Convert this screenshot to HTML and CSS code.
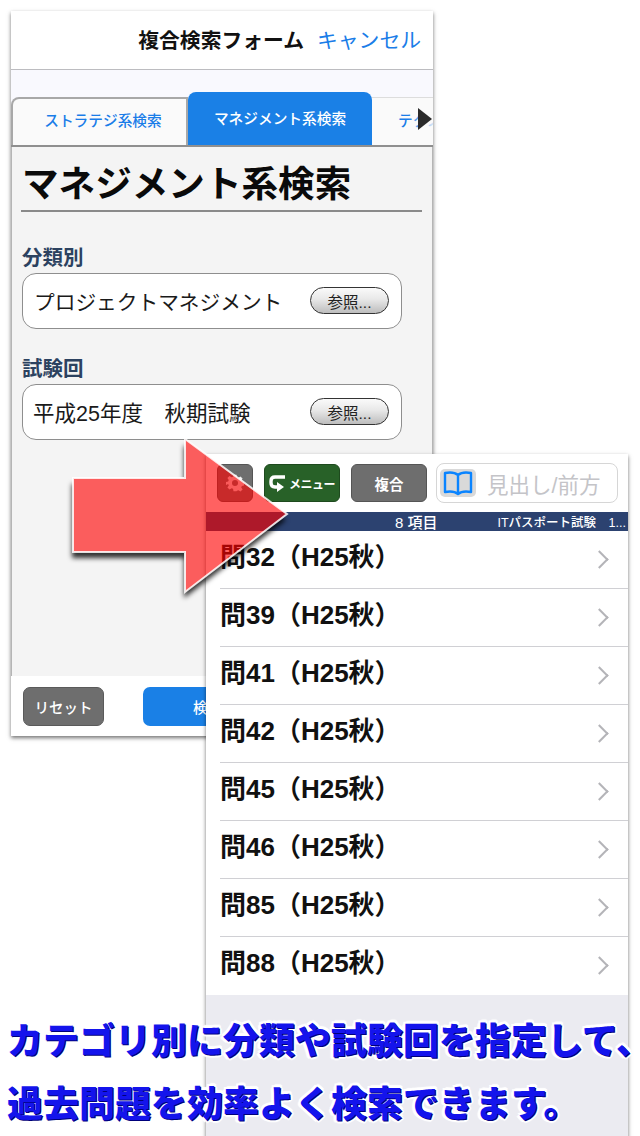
FILE: index.html
```html
<!DOCTYPE html>
<html lang="ja">
<head>
    <meta charset="UTF-8">
    <meta name="viewport" content="width=device-width, initial-scale=1.0">
    <title>複合検索フォーム</title>
    <link rel="stylesheet" href="styles.css">
</head>
<body>
    <!-- back window: search form -->
    <section class="phone phone-form">
        <header class="form-header">
            <h2>複合検索フォーム</h2>
            <a href="#">キャンセル</a>
        </header>
        <div class="tab-band"></div>
        <nav class="tabs">
            <a href="#" class="tab">ストラテジ系検索</a>
            <a href="#" class="tab tab-active">マネジメント系検索</a>
            <a href="#" class="tab tab-cut">テクノロジ系検索</a>
            <svg class="tab-more" width="14" height="22" viewBox="0 0 14 22"><path d="M0 0L14 11L0 22Z" fill="#2a2a2a"/></svg>
        </nav>
        <div class="form-body">
            <h1>マネジメント系検索</h1>
            <div class="group">
                <h3>分類別</h3>
                <div class="field">
                    <span class="field-kana">プロジェクトマネジメント</span>
                    <button class="browse">参照...</button>
                </div>
            </div>
            <div class="group">
                <h3>試験回</h3>
                <div class="field">
                    <span>平成25年度　秋期試験</span>
                    <button class="browse">参照...</button>
                </div>
            </div>
        </div>
        <footer class="form-footer">
            <button class="btn-reset">リセット</button>
            <button class="btn-search">検索を実行する</button>
        </footer>
    </section>

    <!-- front window: results -->
    <section class="phone phone-list">
        <div class="toolbar">
            <button class="tool tool-gear">
                <svg width="18" height="18" viewBox="0 0 24 24"><path fill="#f0f0f0" fill-rule="evenodd" d="M10 1h4l.6 3.2 2 .8L19.300 3.200l2.800 2.800-1.800 2.700.8 2 3.200.6v4l-3.200.6-.8 2 1.800 2.700-2.800 2.800-2.700-1.800-2 .8L14 23h-4l-.6-3.200-2-.8-2.700 1.800-2.800-2.800 1.800-2.700-.8-2L-.3 14.700v-4l3.200-.6.8-2L1.900 5.400 4.700 2.600l2.700 1.800 2-.8zM12 8a4 4 0 1 0 0 8 4 4 0 0 0 0-8z"/></svg>
            </button>
            <button class="tool tool-menu">
                <svg width="18" height="18" viewBox="0 0 18 18"><path fill="none" stroke="#fff" stroke-width="3.400" d="M16 3H6Q2 3 2 7V9Q2 13 6 13H8"/><path fill="#fff" d="M8 8l7 5-7 5z"/></svg>
                <span>メニュー</span>
            </button>
            <button class="tool tool-multi">複合</button>
            <div class="search-box">
                <span class="book">
                    <svg width="30" height="26" viewBox="0 0 30 26"><path fill="none" stroke="#0a84ff" stroke-width="2.400" stroke-linejoin="round" d="M15 5C12 2.500 7 2 2 3v19c5-1 10-.5 13 2 3-2.500 8-3 13-2V3c-5-1-10-.5-13 2zM15 5v19"/></svg>
                </span>
                <span class="search-hint">見出し/前方</span>
            </div>
        </div>
        <div class="count-bar">
            <span class="count">8 項目</span>
            <span class="exam">ITパスポート試験　1...</span>
        </div>
        <ul class="rows">
            <li>問32（H25秋）</li>
            <li>問39（H25秋）</li>
            <li>問41（H25秋）</li>
            <li>問42（H25秋）</li>
            <li>問45（H25秋）</li>
            <li>問46（H25秋）</li>
            <li>問85（H25秋）</li>
            <li>問88（H25秋）</li>
        </ul>
    </section>

    <!-- red arrow over both windows -->
    <svg class="arrow" width="240" height="180" viewBox="60 430 240 180">
        <defs>
            <filter id="soft" x="-20%" y="-20%" width="140%" height="140%"><feGaussianBlur stdDeviation="2.500"/></filter>
            <mask id="outside" maskUnits="userSpaceOnUse" x="60" y="430" width="240" height="180">
                <rect x="60" y="430" width="240" height="180" fill="#fff"/>
                <path d="M73 478H185V439L287 514L185 592V552H73Z" fill="#000"/>
            </mask>
        </defs>
        <g mask="url(#outside)">
            <path d="M73 478H185V439L287 514L185 592V552H73Z" transform="translate(-1 6)" fill="#000" fill-opacity=".8" filter="url(#soft)"/>
        </g>
        <path d="M73 478H185V439L287 514L185 592V552H73Z" fill="#ff0000" fill-opacity=".62" stroke="#fff" stroke-opacity=".85" stroke-width="2"/>
    </svg>

    <p class="caption">カテゴリ別に分類や試験回を指定して、<br>過去問題を効率よく検索できます。</p>
</body>
</html>
```

FILE: styles.css
```css
* {
    box-sizing: border-box;
}

body {
    margin: 0;
    width: 640px;
    height: 1136px;
    position: relative;
    overflow: hidden;
    background: #fff;
    font-family: "Liberation Sans", "Noto Sans CJK JP", sans-serif;
    color: #111;
}

button {
    font-family: inherit;
    padding: 0;
}

.phone {
    position: absolute;
    width: 422px;
    background: #fff;
    box-shadow: 0 2px 4px rgba(0, 0, 0, 0.55);
    display: flex;
    flex-direction: column;
}

.phone-form {
    left: 11px;
    top: 11px;
    height: 725px;
}

.phone-list {
    left: 206px;
    top: 454px;
    height: 690px;
    background: #ebebf1;
}

/* form header */
.form-header {
    height: 59px;
    flex: none;
    background: #fff;
    border-bottom: 1px solid #bcbcc0;
    display: flex;
    align-items: center;
    justify-content: flex-end;
    padding: 0 12px 2px 0;
    gap: 13px;
    font-size: 20.800px;
}

.form-header h2 {
    margin: 0;
    font-size: inherit;
    font-weight: 700;
}

.form-header a {
    color: #1a7de8;
    text-decoration: none;
}

.tab-band {
    height: 22px;
    flex: none;
    background: #f9f9fe;
}

/* tabs */
.tabs {
    height: 55px;
    flex: none;
    display: flex;
    align-items: flex-end;
    position: relative;
    overflow: hidden;
    background: #f9f9fe;
    border-bottom: 2px solid #8f8f8f;
}

.tab {
    height: 48px;
    width: 177px;
    flex: none;
    display: flex;
    align-items: center;
    justify-content: center;
    padding: 0 0 5px 7px;
    font-size: 14.700px;
    font-weight: 500;
    color: #1a7de8;
    text-decoration: none;
    background: #fafafa;
    border: 2px solid #a8a8a8;
    border-bottom: 0;
    border-radius: 8px 0 0 0;
}

.tab-active {
    height: 53px;
    width: 184px;
    padding: 0 0 2px;
    color: #fff;
    background: #1a80e6;
    border: 0;
    border-radius: 8px 8px 0 0;
}

.tab-cut {
    width: 130px;
    justify-content: flex-start;
    padding-left: 26px;
    white-space: nowrap;
    overflow: hidden;
    position: relative;
    border: 0;
    border-top: 1px solid #ddd;
    border-radius: 0;
}

.tab-cut::after {
    content: "";
    position: absolute;
    left: 36px;
    top: 0;
    right: 0;
    bottom: 0;
    background: linear-gradient(to right, rgba(250, 250, 250, 0), #fafafa 30px);
}

.tab-more {
    position: absolute;
    right: 1px;
    top: 16px;
}

/* form body */
.form-body {
    flex: 1;
    background: #f4f4f4;
    padding: 13px 10px 0 9px;
    border-left: 1px solid #b5b5b5;
    border-right: 1px solid #b5b5b5;
}

.form-body h1 {
    margin: 0 0 33px;
    height: 52px;
    padding-left: 1px;
    font-size: 36.600px;
    line-height: 49px;
    font-weight: 700;
    color: #0a0a0a;
    border-bottom: 2px solid #8a8a8a;
    white-space: nowrap;
}

.group {
    margin: 0 20px 27px 1px;
}

.group h3 {
    margin: 0 0 2px;
    font-size: 20.500px;
    line-height: 26px;
    font-weight: 700;
    color: #2c4260;
}

.field {
    height: 56px;
    background: #fff;
    border: 1px solid #8e8e8e;
    border-radius: 14px;
    display: flex;
    align-items: center;
    justify-content: space-between;
    padding: 0 12px 1px 10px;
    font-size: 21.500px;
    color: #1a1a1a;
}

.field-kana {
    font-size: 20.700px;
    padding-left: 1px;
}

.browse {
    width: 79px;
    height: 27px;
    font-size: 15.500px;
    color: #222;
    border: 1px solid #333;
    border-radius: 14px;
    background: linear-gradient(to bottom, #fafafa, #e8e8e8 45%, #bdbdbd);
}

/* form footer */
.form-footer {
    height: 60px;
    flex: none;
    background: #fff;
    display: flex;
    align-items: center;
    gap: 39px;
    padding: 0 12px;
}

.btn-reset,
.btn-search {
    height: 39px;
    border-radius: 7px;
    color: #fff;
    font-size: 14.500px;
    font-weight: 500;
    border: 0;
}

.btn-reset {
    width: 81px;
    background: #6e6e6e;
    border: 1px solid #5a5a5a;
}

.btn-search {
    flex: 1;
    background: #1a80e6;
    text-align: left;
    padding-left: 50px;
}

/* results toolbar */
.toolbar {
    height: 58px;
    flex: none;
    background: #fff;
    display: flex;
    align-items: center;
    padding: 0 10px 0 11px;
}

.tool {
    height: 38px;
    border-radius: 6px;
    border: 1px solid #555;
    background: #6e6e6e;
    color: #fff;
    font-size: 14.500px;
    font-weight: 700;
    display: flex;
    align-items: center;
    justify-content: center;
}

.tool-gear {
    width: 36px;
    margin-right: 11px;
}

.tool-menu {
    width: 76px;
    margin-right: 11px;
    background: #286128;
    border-color: #1e4a1e;
    font-size: 12px;
    letter-spacing: -0.5px;
    gap: 2px;
}

.tool-multi {
    width: 76px;
    margin-right: 9px;
}

.search-box {
    flex: 1;
    height: 40px;
    background: #fff;
    border: 1px solid #d6d6d6;
    border-radius: 8px;
    display: flex;
    align-items: center;
    padding-left: 3px;
}

.book {
    width: 36px;
    height: 28px;
    background: #d9d9d9;
    border-radius: 5px;
    display: flex;
    align-items: center;
    justify-content: center;
}

.search-hint {
    margin-left: 11px;
    font-size: 21.500px;
    color: #c4c4c8;
    white-space: nowrap;
}

/* count bar */
.count-bar {
    height: 19px;
    flex: none;
    background: #2c4270;
    color: #fff;
    display: flex;
    align-items: center;
    font-weight: 500;
    white-space: nowrap;
}

.count {
    margin-left: 189px;
    font-size: 15px;
}

.exam {
    margin-left: 60px;
    font-size: 12.500px;
}

/* rows */
.rows {
    list-style: none;
    margin: 0;
    padding: 0 0 0 14px;
    background: #fff;
    flex: none;
}

.rows li {
    height: 58px;
    position: relative;
    display: flex;
    align-items: center;
    font-size: 26px;
    font-weight: 700;
    color: #111;
    border-bottom: 1px solid #d0d0d4;
    padding-bottom: 11px;
}

.rows li:last-child {
    border-bottom: 0;
}

.rows li::after {
    content: "";
    position: absolute;
    right: 22px;
    top: 22px;
    width: 11px;
    height: 11px;
    border-top: 2px solid #b4b4b8;
    border-right: 2px solid #b4b4b8;
    transform: rotate(45deg);
}

/* overlays */
.arrow {
    position: absolute;
    left: 60px;
    top: 430px;
}

.caption {
    position: absolute;
    left: 7px;
    top: 1010px;
    margin: 0;
    white-space: nowrap;
    font-size: 36px;
    line-height: 63px;
    font-weight: 900;
    color: #1414ec;
    text-shadow:
        1px 1px 0 #00007a,
        2px 0 0 #fff, -2px 0 0 #fff, 0 2px 0 #fff, 0 -2px 0 #fff,
        2px 2px 0 #fff, -2px 2px 0 #fff, 2px -2px 0 #fff, -2px -2px 0 #fff,
        3px 1px 1px #fff, -3px 1px 1px #fff, 1px 3px 1px #fff, 1px -3px 1px #fff;
}
```
